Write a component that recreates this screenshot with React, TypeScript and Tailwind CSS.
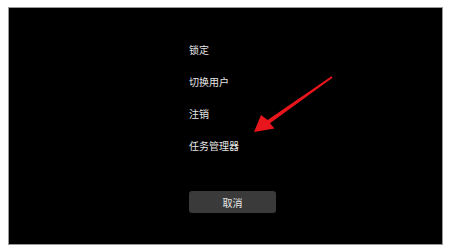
export default function App() {
  const items = ["锁定", "切换用户", "注销", "任务管理器"];
  return (
    <div className="relative w-[450px] h-[252px] bg-white pt-[7px] pl-[8px] font-['Noto_Sans_CJK_SC','Noto_Sans',sans-serif]">
      <div className="w-[435px] h-[238px] bg-black border border-[#9a9a9a] flex flex-col pl-[180px] pt-[25px]">
        {items.map((t) => (
          <div key={t} className="h-8 flex items-center text-[10px] text-[#e6e6e6]">
            {t}
          </div>
        ))}
        <button className="mt-[30px] w-[87px] h-[22px] rounded-[3px] bg-[#3a3a3a] text-[10px] text-[#e6e6e6] flex items-center justify-center">
          取消
        </button>
      </div>

      {/* red arrow */}
      <svg className="absolute left-0 top-0" width="450" height="252" viewBox="0 0 450 252">
        <polygon
          points="254,132 261,115 267.6,119.9 331.5,76.3 332.5,77.7 270,123.2 274.5,128.5"
          fill="#e8161c"
        />
      </svg>
    </div>
  );
}
